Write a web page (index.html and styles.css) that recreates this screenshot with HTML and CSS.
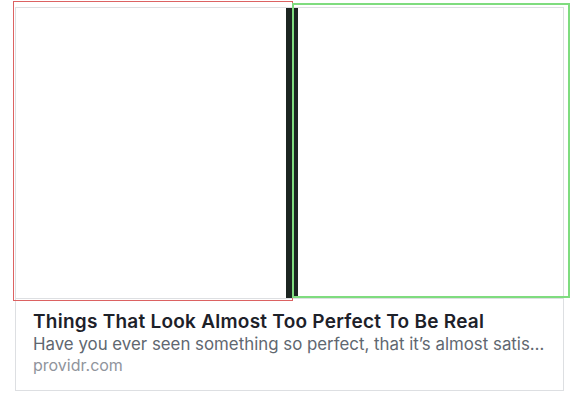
FILE: index.html
```html
<!DOCTYPE html>
<html>
<head>
<meta charset="utf-8">
<link rel="stylesheet" href="styles.css">
</head>
<body>
<div class="card">
  <div class="media">
    <div class="pane pane-left"></div>
    <div class="divider"></div>
    <div class="pane pane-right"></div>
  </div>
  <div class="info">
    <div class="title">Things That Look Almost Too Perfect To Be Real</div>
    <div class="desc">Have you ever seen something so perfect, that it’s almost satis…</div>
    <div class="domain">providr.com</div>
  </div>
</div>
<div class="outline outline-red"></div>
<div class="outline outline-green"></div>
</body>
</html>
```
FILE: styles.css
```css
html, body {
  margin: 0;
  padding: 0;
  background: #ffffff;
}
body {
  position: relative;
  width: 578px;
  height: 400px;
  overflow: hidden;
  font-family: Inter, "Liberation Sans", Arial, sans-serif;
}
.card {
  margin: 7px 0 0 15px;
  width: 549px;
  box-sizing: border-box;
  border: 1px solid #dddfe2;
  background: #fff;
}
.media {
  display: flex;
  height: 290px;
  border-bottom: 1px solid #dddfe2;
}
.pane {
  background: #fff;
}
.pane-left {
  width: 270px;
}
.divider {
  width: 12px;
  background: #1c2521;
}
.pane-right {
  flex: 1;
}
.info {
  padding: 11px 17px 14px 17px;
}
.title {
  font-size: 19px;
  line-height: 23px;
  font-weight: 600;
  letter-spacing: 0.25px;
  color: #1d2129;
  white-space: nowrap;
}
.desc {
  font-size: 16.85px;
  line-height: 22px;
  color: #606770;
  white-space: nowrap;
}
.domain {
  font-size: 16px;
  line-height: 21px;
  color: #90949c;
}
.outline {
  position: absolute;
  box-sizing: border-box;
  pointer-events: none;
}
.outline-red {
  left: 13px;
  top: 1px;
  width: 280px;
  height: 300px;
  border: 1px solid #dc6262;
}
.outline-green {
  left: 292px;
  top: 3px;
  width: 278px;
  height: 295px;
  border: 2px solid #7fdc7f;
}
```
